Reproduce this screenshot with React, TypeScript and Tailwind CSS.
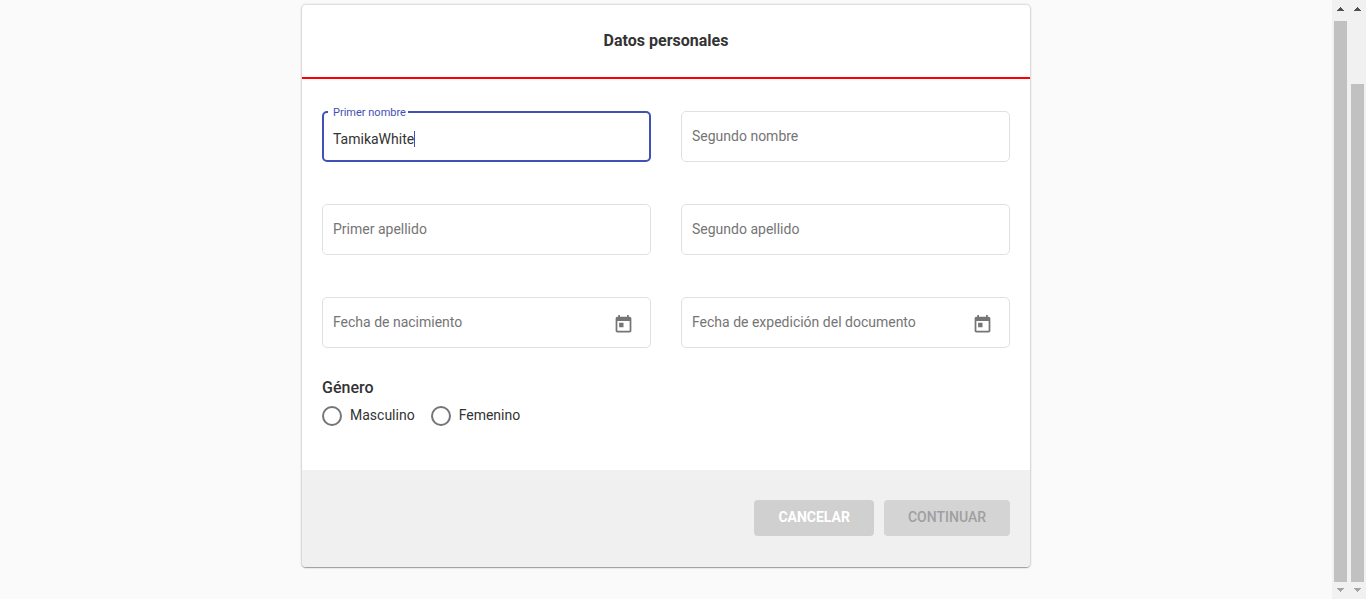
import { useState } from "react";

type FieldProps = { id: string; label: string; calendar?: boolean };

function CalendarIcon() {
  return (
    <svg viewBox="0 0 24 24" className="size-[21px]" fill="currentColor" aria-hidden="true">
      <path d="M19 3h-1V1h-2v2H8V1H6v2H5c-1.11 0-1.99.9-1.99 2L3 19c0 1.1.89 2 2 2h14c1.1 0 2-.9 2-2V5c0-1.1-.9-2-2-2zm0 16H5V8h14v11zM7 10h5v5H7z" />
    </svg>
  );
}

function Field({ id, label, calendar }: FieldProps) {
  const [value, setValue] = useState("");
  return (
    <div className="relative flex h-[51px] items-center rounded-[5px] border border-[#e0e0e0] bg-white pr-[11px] pl-2.5">
      <input
        id={id}
        value={value}
        onChange={(e) => setValue(e.target.value)}
        className="h-full min-w-0 flex-1 bg-transparent text-sm text-[#333] outline-none"
      />
      <label
        htmlFor={id}
        className={
          value
            ? "absolute -top-2 left-[5px] bg-white px-[5px] text-[11px] leading-4 text-[#757575]"
            : "pointer-events-none absolute top-3.5 left-2.5 text-sm leading-5 text-[#757575]"
        }
      >
        {label}
      </label>
      {calendar && (
        <button
          type="button"
          aria-label={`Abrir calendario: ${label}`}
          className="flex h-8 w-8 items-end justify-center pb-1 text-[#757575]"
        >
          <CalendarIcon />
        </button>
      )}
    </div>
  );
}

function FirstNameField() {
  const [value, setValue] = useState("TamikaWhite");
  return (
    <div className="relative flex h-[51px] items-center rounded-[5px] border-2 border-[#3f51b5] bg-white px-[9px] pt-1">
      <input
        id="primer-nombre"
        value={value}
        onChange={(e) => setValue(e.target.value)}
        className="field-sizing-content h-5 max-w-full bg-transparent text-sm text-[#333] caret-transparent outline-none"
      />
      <span className="h-4 w-px bg-[#3f51b5]" />
      <label
        htmlFor="primer-nombre"
        className="absolute -top-2 left-1 bg-white pr-0.5 pl-[5px] text-[11px] leading-4 text-[#3f51b5]"
      >
        Primer nombre
      </label>
    </div>
  );
}

function Radio({ id, label }: { id: string; label: string }) {
  return (
    <div className="flex items-start gap-2">
      <input
        type="radio"
        name="genero"
        id={id}
        className="size-5 appearance-none rounded-full border-2 border-[#757575] bg-white checked:border-[6px] checked:border-[#3f51b5]"
      />
      <label htmlFor={id} className="text-sm leading-[18px]">
        {label}
      </label>
    </div>
  );
}

function ScrollTrack({ thumb }: { thumb: string }) {
  return (
    <div className="flex w-[17px] flex-col items-center bg-[#f1f1f1]">
      <svg viewBox="0 0 17 17" className="h-[17px] w-[17px] shrink-0" shapeRendering="crispEdges" aria-hidden="true">
        <path d="M8 7h1v1h1v1h1v1h1v1H5v-1h1V9h1V8h1z" fill="#505050" />
      </svg>
      <div className={thumb} />
      <svg viewBox="0 0 17 17" className="h-[17px] w-[17px] shrink-0" shapeRendering="crispEdges" aria-hidden="true">
        <path d="M5 6h7v1h-1v1h-1v1H9v1H8V9H7V8H6V7H5z" fill="#a3a3a3" />
      </svg>
    </div>
  );
}

export default function App() {
  return (
    <div className="flex h-screen bg-[#fafafa] font-['Roboto',sans-serif] text-[#333]">
      <main className="flex min-w-0 flex-1 items-start justify-center pt-[5px]">
        <form className="w-full max-w-[728px] overflow-hidden rounded bg-white shadow-[0_1px_1px_0_rgba(0,0,0,0.3),0_0_2px_1px_rgba(0,0,0,0.14)]">
          <header className="border-b-2 border-[#ff0000] py-6 text-center">
            <h1 className="text-base leading-6 font-bold">Datos personales</h1>
          </header>
          <div className="px-5 pt-8 pb-11">
            <div className="grid grid-cols-2 gap-x-[30px] gap-y-[42px]">
              <FirstNameField />
              <Field id="segundo-nombre" label="Segundo nombre" />
              <Field id="primer-apellido" label="Primer apellido" />
              <Field id="segundo-apellido" label="Segundo apellido" />
              <Field id="fecha-nacimiento" label="Fecha de nacimiento" calendar />
              <Field id="fecha-expedicion" label="Fecha de expedición del documento" calendar />
            </div>
            <fieldset className="mt-7">
              <legend className="text-base leading-6 font-medium">Género</legend>
              <div className="mt-1.5 flex gap-4">
                <Radio id="masculino" label="Masculino" />
                <Radio id="femenino" label="Femenino" />
              </div>
            </fieldset>
          </div>
          <footer className="flex justify-end gap-2.5 bg-[#f0f0f0] px-5 pt-[30px] pb-[31px]">
            <button type="button" className="h-9 rounded bg-[#d0d0d0] px-6 pb-0.5 text-sm font-bold text-white">
              CANCELAR
            </button>
            <button type="submit" disabled className="h-9 rounded bg-[#d4d4d4] px-6 pb-0.5 text-sm font-medium text-[#9f9f9f]">
              CONTINUAR
            </button>
          </footer>
        </form>
      </main>
      <div className="flex" aria-hidden="true">
        <ScrollTrack thumb="mt-1 w-[13px] flex-1 bg-[#c1c1c1]" />
        <ScrollTrack thumb="mt-[67px] w-[13px] flex-1 bg-[#c1c1c1]" />
      </div>
    </div>
  );
}
